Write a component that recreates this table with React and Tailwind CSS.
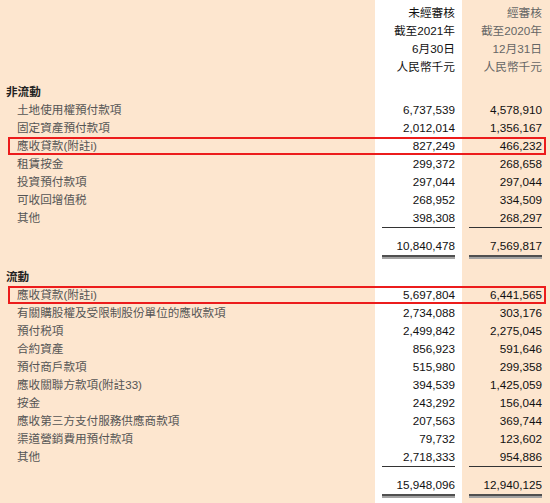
import React from 'react';

const FONT = { fontFamily: '"Liberation Sans", "Noto Sans CJK TC", sans-serif' };

const nonCurrent = [
  ['土地使用權預付款項', '6,737,539', '4,578,910'],
  ['固定資產預付款項', '2,012,014', '1,356,167'],
  ['應收貸款(附註i)', '827,249', '466,232', true],
  ['租賃按金', '299,372', '268,658'],
  ['投資預付款項', '297,044', '297,044'],
  ['可收回增值税', '268,952', '334,509'],
  ['其他', '398,308', '268,297'],
];

const current = [
  ['應收貸款(附註i)', '5,697,804', '6,441,565', true],
  ['有關購股權及受限制股份單位的應收款項', '2,734,088', '303,176'],
  ['預付税項', '2,499,842', '2,275,045'],
  ['合約資產', '856,923', '591,646'],
  ['預付商戶款項', '515,980', '299,358'],
  ['應收關聯方款項(附註33)', '394,539', '1,425,059'],
  ['按金', '243,292', '156,044'],
  ['應收第三方支付服務供應商款項', '207,563', '369,744'],
  ['渠道營銷費用預付款項', '79,732', '123,602'],
  ['其他', '2,718,333', '954,886'],
];

// 一行：左標籤 + 白色欄 + 米色欄
function Row({ label, a, b, bold, boxed, head }) {
  return (
    <div className="relative grid grid-cols-[375px_87px_88px] h-[18px] leading-none">
      <div className={bold ? 'flex items-center text-[11.6px] pl-[6px] font-bold text-[#222]' : 'flex items-center text-[11.6px] pl-[17px] text-[#555]'}>{label}</div>
      <div className="bg-white flex items-center justify-end pr-[7px] text-[11.7px] text-[#111]">{a}</div>
      <div className={head ? 'flex items-center justify-end pr-[8px] text-[11.7px] text-[#666]' : 'flex items-center justify-end pr-[8px] text-[11.7px] text-[#111]'}>{b}</div>
      {boxed && <div className="absolute left-[8px] right-[4px] top-0 bottom-0 border-2 border-[#ec1c1c]" />}
    </div>
  );
}

// 合計：上方單線，下方雙線
function Total({ a, b }) {
  return (
    <div className="grid grid-cols-[375px_87px_88px] leading-none">
      <div />
      <div className="bg-white pl-[7px] pr-[7px]">
        <div className="border-t border-solid border-[#333] pt-[9px]">
          <div className="border-b-2 border-solid border-[#a3a3a3]">
            <div className="h-[20px] flex items-center justify-end text-[11.7px] text-[#111] border-b-2 border-solid border-[#505050]">{a}</div>
          </div>
        </div>
      </div>
      <div className="pl-[7px] pr-[8px]">
        <div className="border-t border-solid border-[#333] pt-[9px]">
          <div className="border-b-2 border-solid border-[#a3a3a3]">
            <div className="h-[20px] flex items-center justify-end text-[11.7px] text-[#111] border-b-2 border-solid border-[#505050]">{b}</div>
          </div>
        </div>
      </div>
    </div>
  );
}

function Gap({ className }) {
  return (
    <div className={`grid grid-cols-[375px_87px_88px] ${className}`}>
      <div />
      <div className="bg-white" />
      <div />
    </div>
  );
}

export default function App() {
  return (
    <div className="w-[550px] h-[503px] overflow-hidden bg-[#fde6cf]" style={FONT}>
      <Gap className="h-[4px]" />
      <Row a="未經審核" b="經審核" head />
      <Row a="截至2021年" b="截至2020年" head />
      <Row a="6月30日" b="12月31日" head />
      <Row a="人民幣千元" b="人民幣千元" head />
      <Gap className="h-[7px]" />
      <Row label="非流動" bold />
      {nonCurrent.map((r, i) => (
        <Row key={i} label={r[0]} a={r[1]} b={r[2]} boxed={r[3]} />
      ))}
      <Total a="10,840,478" b="7,569,817" />
      <Gap className="h-[9px]" />
      <Row label="流動" bold />
      {current.map((r, i) => (
        <Row key={i} label={r[0]} a={r[1]} b={r[2]} boxed={r[3]} />
      ))}
      <Total a="15,948,096" b="12,940,125" />
      <Gap className="h-[10px]" />
    </div>
  );
}
